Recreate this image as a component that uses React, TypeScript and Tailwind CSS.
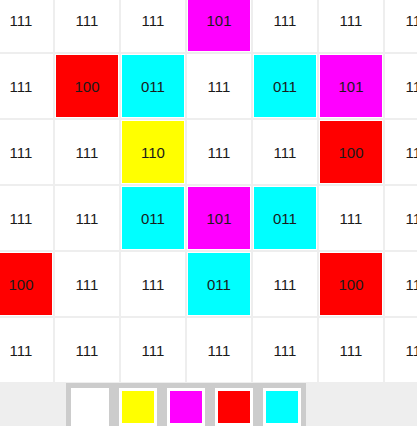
import React from 'react';

// colour for each bit code
const colors: Record<string, string> = {
  '111': 'bg-white',
  '100': 'bg-[#ff0000]',
  '011': 'bg-[#00ffff]',
  '101': 'bg-[#ff00ff]',
  '110': 'bg-[#ffff00]',
};

const rows: string[][] = [
  ['111', '111', '111', '101', '111', '111', '111'],
  ['111', '100', '011', '111', '011', '101', '111'],
  ['111', '111', '110', '111', '111', '100', '111'],
  ['111', '111', '011', '101', '011', '111', '111'],
  ['100', '111', '111', '011', '111', '100', '111'],
  ['111', '111', '111', '111', '111', '111', '111'],
];

const swatches = ['bg-white', 'bg-[#ffff00]', 'bg-[#ff00ff]', 'bg-[#ff0000]', 'bg-[#00ffff]'];

const Cell = ({ code }: { code: string }) => (
  <div className="h-[66px] w-[66px] shrink-0 border border-[#eeeeee] bg-white p-[1px]">
    <div className={`flex h-full w-full items-center justify-center ${colors[code]}`}>
      <span className="text-[15px] leading-none text-[#1a1a1a]">{code}</span>
    </div>
  </div>
);

export default function App() {
  return (
    <div
      className="flex h-[426px] w-full flex-col overflow-hidden bg-white"
      style={{ fontFamily: '"Liberation Sans", Arial, sans-serif' }}
    >
      {/* board */}
      <div className="h-[382px] shrink-0 overflow-hidden">
        <div className="ml-[-12px] mt-[-13px] flex w-max flex-col">
          {rows.map((row, i) => (
            <div key={i} className="flex">
              {row.map((code, j) => (
                <Cell key={j} code={code} />
              ))}
            </div>
          ))}
        </div>
      </div>

      {/* palette */}
      <div className="h-[44px] shrink-0 overflow-hidden bg-[#eeeeee] pl-[66px] pt-[1px]">
        <div className="flex w-fit bg-[#cccccc]">
          {swatches.map((c, i) => (
            <div key={i} className="m-[5px] h-[38px] w-[38px] bg-white p-[3px]">
              <div className={`h-full w-full ${c}`} />
            </div>
          ))}
        </div>
      </div>
    </div>
  );
}
